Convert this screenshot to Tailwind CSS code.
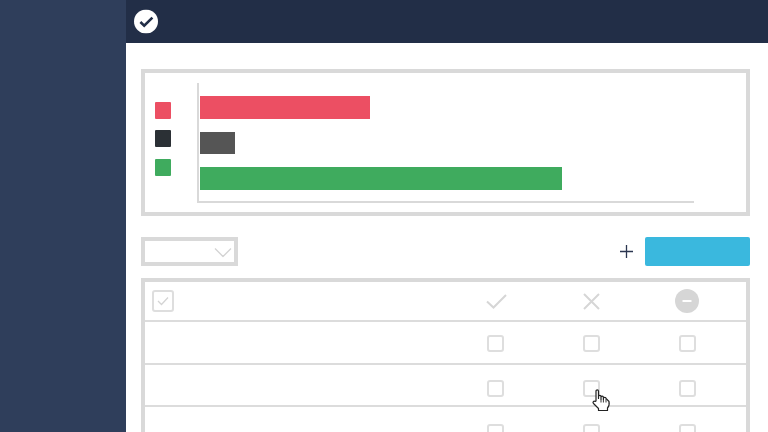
<!DOCTYPE html>
<html>
<head>
<meta charset="utf-8">
<script src="https://cdn.jsdelivr.net/npm/@tailwindcss/browser@4"></script>
</head>
<body class="bg-white">
<div class="relative flex h-[432px] w-[768px] overflow-hidden bg-white">
  <aside class="h-full w-[126px] shrink-0 bg-[#2f3e5b]"></aside>
  <main class="flex h-full flex-1 flex-col">
    <header class="flex h-[43px] shrink-0 items-center bg-[#222e47] pl-[7.5px]">
      <svg class="h-[24px] w-[24px] -translate-y-[0.5px]" viewBox="0 0 24 24"><circle cx="12" cy="12" r="12" fill="#fff"/><path d="M6.400 12.500l3.800 3.600 8.200-8" fill="none" stroke="#222e47" stroke-width="2.600"/></svg>
    </header>
    <div class="flex flex-col pl-[15px] pr-[18px] pt-[26px]">
      <section class="flex h-[147px] border-4 border-[#d9d9d9] pl-[10px] pt-[10px]">
        <div class="flex w-[42px] shrink-0 flex-col gap-[11.500px] pt-[18.500px]">
          <div class="h-[17px] w-[16px] rounded-[1px] bg-[#ec4f63]"></div>
          <div class="h-[17px] w-[16px] rounded-[1px] bg-[#2b3035]"></div>
          <div class="h-[17px] w-[16px] rounded-[1px] bg-[#3fab5e]"></div>
        </div>
        <div class="flex h-[120px] w-[497px] flex-col gap-[13px] border-b-2 border-l-2 border-[#d9d9d9] pl-[0.500px] pt-[13px]">
          <div class="h-[22.500px] w-[170px] bg-[#ec4f63]"></div>
          <div class="h-[22.500px] w-[35px] bg-[#555555]"></div>
          <div class="h-[22.500px] w-[362px] bg-[#3fab5e]"></div>
        </div>
      </section>
      <div class="mt-[21px] flex h-[29px] items-center">
        <div class="flex h-[29px] w-[96.500px] items-center justify-end border-4 border-[#d9d9d9] pr-[2px]">
          <svg class="h-[10px] w-[18px] translate-y-[0.5px]" viewBox="0 0 18 10"><path d="M1 1l8 8 8-8" fill="none" stroke="#d4d4d4" stroke-width="1.400"/></svg>
        </div>
        <svg class="ml-auto h-[13px] w-[13px]" viewBox="0 0 13 13"><path d="M6.500 0v13M0 6.500h13" fill="none" stroke="#2b3650" stroke-width="1.300"/></svg>
        <div class="ml-[12px] h-[29px] w-[105px] rounded-[2px] bg-[#3ab8de]"></div>
      </div>
      <section class="mt-[12px] h-[160px] border-x-4 border-t-4 border-[#d9d9d9]">
        <div class="flex h-[40px] items-center border-b-2 border-[#dcdcdc] pl-[7px] pr-[11px]">
          <div class="flex h-[22px] w-[22px] items-center justify-center rounded-[3px] border-2 border-[#dedede]">
            <svg class="h-[10px] w-[12px]" viewBox="0 0 12 10"><path d="M1 5l3.500 3.500L11 1.500" fill="none" stroke="#d4d4d4" stroke-width="1.300"/></svg>
          </div>
          <div class="ml-auto grid w-[288px] grid-cols-3 items-center justify-items-center">
            <svg class="ml-[2px] h-[15px] w-[21px]" viewBox="0 0 21 15"><path d="M1 7.500l6.500 6L20 1" fill="none" stroke="#d6d6d6" stroke-width="2"/></svg>
            <svg class="h-[17px] w-[17px]" viewBox="0 0 17 17"><path d="M1 1l15 15M16 1L1 16" fill="none" stroke="#d6d6d6" stroke-width="2"/></svg>
            <svg class="h-[24px] w-[24px]" viewBox="0 0 24 24"><circle cx="12" cy="12" r="12" fill="#d6d6d6"/><path d="M7.500 12h9" stroke="#fff" stroke-width="2"/></svg>
          </div>
        </div>
        <div class="flex h-[42.500px] items-center justify-end border-b-2 border-[#dcdcdc] pr-[11px] pt-[2px]">
          <div class="grid w-[288px] grid-cols-3 justify-items-center">
            <div class="h-[17px] w-[17px] rounded-[3px] border-2 border-[#dedede]"></div>
            <div class="h-[17px] w-[17px] rounded-[3px] border-2 border-[#dedede]"></div>
            <div class="h-[17px] w-[17px] rounded-[3px] border-2 border-[#dedede]"></div>
          </div>
        </div>
        <div class="flex h-[42.500px] items-center justify-end border-b-2 border-[#dcdcdc] pr-[11px] pt-[8px]">
          <div class="grid w-[288px] grid-cols-3 justify-items-center">
            <div class="h-[17px] w-[17px] rounded-[3px] border-2 border-[#dedede]"></div>
            <div class="h-[17px] w-[17px] rounded-[3px] border-2 border-[#dedede]"></div>
            <div class="h-[17px] w-[17px] rounded-[3px] border-2 border-[#dedede]"></div>
          </div>
        </div>
        <div class="flex h-[42.500px] items-center justify-end pr-[11px] pt-[9px]">
          <div class="grid w-[288px] grid-cols-3 justify-items-center">
            <div class="h-[17px] w-[17px] rounded-[3px] border-2 border-[#dedede]"></div>
            <div class="h-[17px] w-[17px] rounded-[3px] border-2 border-[#dedede]"></div>
            <div class="h-[17px] w-[17px] rounded-[3px] border-2 border-[#dedede]"></div>
          </div>
        </div>
      </section>
    </div>
  </main>
  <svg class="absolute left-[591px] top-[388px] h-[24px] w-[20px]" viewBox="0 0 20 24">
    <path d="M5 13V3.200C5 1.500 7.500 1.500 7.500 3.200V10.500V8.500C7.500 7 10 7 10 8.500V11V9.200C10 7.800 12.400 7.800 12.400 9.200V11.500V10.300C12.400 9 15 9 15 10.300L18 13.500C18.500 16 17.800 18.500 16.500 20V22.500H7.500V20.500L2.500 15.500C1.200 14 2.800 12.500 4.200 13.500Z" fill="#fff" stroke="#222" stroke-width="1.200" stroke-linejoin="round"/>
    <path d="M10 11v3.500M12.400 11.500v3M15 11v3.500" stroke="#222" stroke-width="0.900" fill="none"/>
  </svg>
</div>
</body>
</html>
